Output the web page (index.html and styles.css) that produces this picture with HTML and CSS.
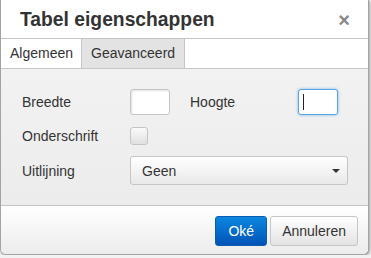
FILE: index.html
```
<!DOCTYPE html>
<html lang="nl">
<head>
  <meta charset="UTF-8" />
  <title>Tabel eigenschappen</title>
  <link rel="stylesheet" href="styles.css">
</head>
<body>
  <div class="dialog">
    <div class="head">
      <h1>Tabel eigenschappen</h1>
      <span class="close">&times;</span>
    </div>

    <div class="tabs">
      <div class="tab active">Algemeen</div>
      <div class="tab">Geavanceerd</div>
    </div>

    <div class="panel">
      <div class="row first">
        <label class="label">Breedte</label>
        <div class="field"></div>
        <label class="label second">Hoogte</label>
        <div class="field focused"><span class="caret"></span></div>
      </div>
      <div class="row check-row">
        <label class="label">Onderschrift</label>
        <div class="checkbox"></div>
      </div>
      <div class="row select-row">
        <label class="label">Uitlijning</label>
        <div class="select">
          <span>Geen</span>
          <span class="arrow"></span>
        </div>
      </div>
    </div>

    <div class="foot">
      <button class="btn primary">Oké</button>
      <button class="btn">Annuleren</button>
    </div>
  </div>
</body>
</html>
```

FILE: styles.css
```
* {
  box-sizing: border-box;
}

body {
  margin: 0;
  font-family: "Liberation Sans", Arial, sans-serif;
  font-size: 14px;
  color: #333;
  background-color: #f2f2f2;
}

.dialog {
  width: 369px;
  height: 255px;
  border: 1px solid #a3a3a3;
  border-top: none;
  border-radius: 0 0 6px 6px;
  box-shadow: 1px 1px 3px rgba(0,0,0,0.35);
  background: #fff;
  display: flex;
  flex-direction: column;
  overflow: hidden;
}

.head {
  height: 39px;
  border-bottom: 1px solid #c5c5c5;
  display: flex;
  align-items: center;
  justify-content: space-between;
  padding: 0 18px 0 19px;
  background: #fff;
}

h1 {
  margin: 0;
  font-size: 19.3px;
  font-weight: bold;
  color: #333;
  position: relative;
  top: 1px;
}

.close {
  font-size: 20px;
  font-weight: bold;
  color: #888;
  line-height: 1;
  position: relative;
  top: 1px;
}

.tabs {
  height: 30px;
  display: flex;
  border-bottom: 1px solid #c5c5c5;
  background: #fff;
}

.tab {
  padding: 0 9px;
  line-height: 29px;
  background: #e3e3e3;
  border-right: 1px solid #c5c5c5;
}

.tab.active {
  padding: 0 8px 0 9px;
  background: #fff;
}

.panel {
  height: 137px;
  padding: 20px 0 0 21px;
  background: linear-gradient(#f2f2f2, #ececec);
  border-bottom: 1px solid #c5c5c5;
}

.row {
  display: flex;
  align-items: center;
}

.row.first {
  height: 26px;
}

.check-row {
  height: 22px;
  margin-top: 10px;
}

.select-row {
  height: 29px;
  margin-top: 9px;
}

.label {
  width: 108px;
}

.label.second {
  margin-left: 20px;
}

.field {
  width: 40px;
  height: 26px;
  border: 1px solid #c5c5c5;
  border-radius: 3px;
  background: #fff;
  box-shadow: inset 1px 1px 2px rgba(0,0,0,0.12);
  position: relative;
}

.field.focused {
  border-color: #59a5e5;
  box-shadow: 0 0 3px rgba(89,165,229,0.8);
}

.caret {
  position: absolute;
  left: 4px;
  top: 4px;
  width: 1px;
  height: 16px;
  background: #222;
}

.checkbox {
  width: 18px;
  height: 18px;
  border: 1px solid #c5c5c5;
  border-radius: 3px;
  background: linear-gradient(#fafafa, #e0e0e0);
}

.select {
  width: 218px;
  height: 29px;
  border: 1px solid #c5c5c5;
  border-radius: 3px;
  background: linear-gradient(#fff, #e9e9e9);
  display: flex;
  align-items: center;
  justify-content: space-between;
  padding: 0 7px 0 11px;
}

.arrow {
  width: 0;
  height: 0;
  border-left: 4px solid transparent;
  border-right: 4px solid transparent;
  border-top: 4px solid #333;
}

.foot {
  flex: 1;
  display: flex;
  justify-content: flex-end;
  align-items: flex-start;
  gap: 3px;
  padding: 10px 10px 0 0;
  background: linear-gradient(#fff, #ececec);
}

.btn {
  height: 30px;
  padding: 0 11px;
  font-family: "Liberation Sans", Arial, sans-serif;
  font-size: 14px;
  color: #333;
  border: 1px solid #c5c5c5;
  border-radius: 3px;
  background: linear-gradient(#fff, #e3e3e3);
  cursor: pointer;
}

.btn.primary {
  padding: 0 12px;
  color: #fff;
  border-color: #0a5bb1;
  background: linear-gradient(#0c86e0, #0054b6);
}
```
